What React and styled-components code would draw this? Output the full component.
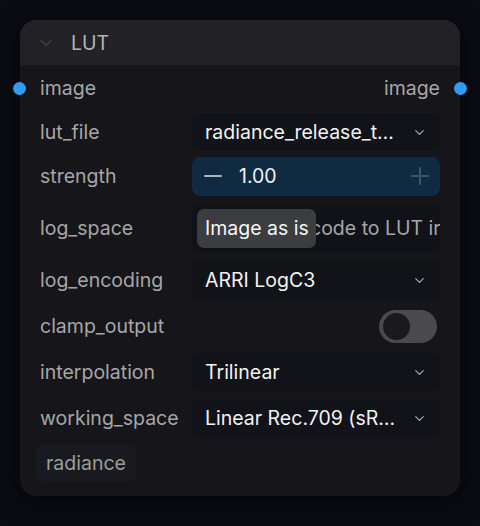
import styled, { createGlobalStyle } from "styled-components";

const GlobalStyle = createGlobalStyle`
  html, body {
    margin: 0;
    padding: 0;
    background: #0a0c13;
  }
  body {
    font-family: Inter, "Noto Sans", "Liberation Sans", sans-serif;
  }
`;

const Page = styled.div`
  width: 480px;
  height: 526px;
  padding: 20px;
  box-sizing: border-box;
  background: #0a0c13;
`;

const Node = styled.div`
  position: relative;
  width: 440px;
  height: 476px;
  background: #161519;
  border-radius: 16px;
  box-shadow: 0 4px 24px rgba(0, 0, 0, 0.6);
  display: flex;
  flex-direction: column;
`;

const Header = styled.div`
  height: 45px;
  background: #222226;
  border-radius: 16px 16px 0 0;
  display: flex;
  align-items: center;
  gap: 15px;
  padding-left: 16px;
  font-size: 19.5px;
  color: #b3b3b3;
`;

const Body = styled.div`
  display: flex;
  flex-direction: column;
  gap: 6px;
  padding: 3px 20px 14px 20px;
`;

const Row = styled.div`
  position: relative;
  height: ${(p) => p.$h || 40}px;
  display: flex;
  align-items: center;
  justify-content: ${(p) => (p.$split ? "space-between" : "flex-start")};
`;

const Label = styled.div`
  width: 152px;
  flex-shrink: 0;
  font-size: 19.5px;
  color: #a6a6a6;
`;

const Slot = styled.span`
  font-size: 19.5px;
  color: #a6a6a6;
`;

const Dot = styled.span`
  position: absolute;
  top: 50%;
  ${(p) => (p.$right ? "right: -27px;" : "left: -27px;")}
  width: 13px;
  height: 13px;
  margin-top: -6.5px;
  border-radius: 50%;
  background: #2f9bf3;
`;

const Select = styled.div`
  flex: 1;
  height: ${(p) => p.$h || 36}px;
  background: #121318;
  border-radius: 8px;
  display: flex;
  align-items: center;
  padding: 0 13px 0 13px;
  font-size: 19.5px;
  color: #f2f2f2;
  gap: 8px;
`;

const Value = styled.span`
  flex: 1;
  white-space: nowrap;
  overflow: hidden;
  text-overflow: ellipsis;
`;

const Number = styled.div`
  flex: 1;
  height: 39px;
  background: #102a42;
  border-radius: 8px;
  display: flex;
  align-items: center;
  padding: 0 10px 0 11px;
  font-size: 19.5px;
  color: #f2f2f2;
`;

const StepButton = styled.span`
  display: flex;
  align-items: center;
  color: ${(p) => (p.$dim ? "#3d556b" : "#a9b3bd")};
`;

const NumValue = styled.span`
  flex: 1;
  padding-left: 16px;
`;

const TextField = styled.div`
  position: relative;
  flex: 1;
  height: 47px;
  background: #111217;
  border-radius: 8px;
  overflow: hidden;
  display: flex;
  align-items: center;
  padding-left: 118px;
  font-size: 19.5px;
  color: #a6a6a6;
  white-space: nowrap;
`;

const Chip = styled.span`
  position: absolute;
  left: 5px;
  top: 4px;
  height: 39px;
  padding: 0 7px 0 8px;
  display: flex;
  align-items: center;
  background: #3c3d41;
  border-radius: 7px;
  color: #f5f5f5;
  font-size: 19.5px;
`;

const Toggle = styled.div`
  margin-left: auto;
  margin-right: 3px;
  width: 58px;
  height: 33px;
  border-radius: 17px;
  background: #4a4a4c;
  display: flex;
  align-items: center;
  padding-left: 4px;
  box-sizing: border-box;
`;

const Knob = styled.span`
  width: 27px;
  height: 27px;
  border-radius: 50%;
  background: #1a1a1c;
`;

const Tag = styled.span`
  margin-left: -4px;
  height: 38px;
  padding: 0 10px;
  display: flex;
  align-items: center;
  background: #181a20;
  border-radius: 8px;
  font-size: 19.5px;
  color: #9c9c9c;
`;

const Chevron = ({ color = "#a6a6a6", size = 15 }) => (
  <svg width={size} height={size} viewBox="0 0 24 24" fill="none" stroke={color} strokeWidth="2" strokeLinecap="round" strokeLinejoin="round">
    <path d="M6 9l6 6 6-6" />
  </svg>
);

const Minus = () => (
  <svg width="20" height="20" viewBox="0 0 20 20" stroke="currentColor" strokeWidth="2" strokeLinecap="round">
    <path d="M2 10h16" />
  </svg>
);

const Plus = () => (
  <svg width="20" height="20" viewBox="0 0 20 20" stroke="currentColor" strokeWidth="2" strokeLinecap="round">
    <path d="M2 10h16M10 2v16" />
  </svg>
);

const bottomSelects = [
  { label: "interpolation", value: "Trilinear" },
  { label: "working_space", value: "Linear Rec.709 (sR…" },
];

export default function App() {
  return (
    <>
      <GlobalStyle />
      <Page>
        <Node>
          <Header>
            <Chevron color="#3b3b40" size={20} />
            <span>LUT</span>
          </Header>
          <Body>
            <Row $split>
              <Dot />
              <Slot>image</Slot>
              <Slot>image</Slot>
              <Dot $right />
            </Row>
            <Row $h={36}>
              <Label>lut_file</Label>
              <Select>
                <Value>radiance_release_t…</Value>
                <Chevron />
              </Select>
            </Row>
            <Row>
              <Label>strength</Label>
              <Number>
                <StepButton>
                  <Minus />
                </StepButton>
                <NumValue>1.00</NumValue>
                <StepButton $dim>
                  <Plus />
                </StepButton>
              </Number>
            </Row>
            <Row $h={52}>
              <Label>log_space</Label>
              <TextField>
                code to LUT ir
                <Chip>Image as is</Chip>
              </TextField>
            </Row>
            <Row>
              <Label>log_encoding</Label>
              <Select $h={38}>
                <Value>ARRI LogC3</Value>
                <Chevron />
              </Select>
            </Row>
            <Row>
              <Label>clamp_output</Label>
              <Toggle>
                <Knob />
              </Toggle>
            </Row>
            {bottomSelects.map((s) => (
              <Row key={s.label}>
                <Label>{s.label}</Label>
                <Select $h={38}>
                  <Value>{s.value}</Value>
                  <Chevron />
                </Select>
              </Row>
            ))}
            <Row $h={38}>
              <Tag>radiance</Tag>
            </Row>
          </Body>
        </Node>
      </Page>
    </>
  );
}
